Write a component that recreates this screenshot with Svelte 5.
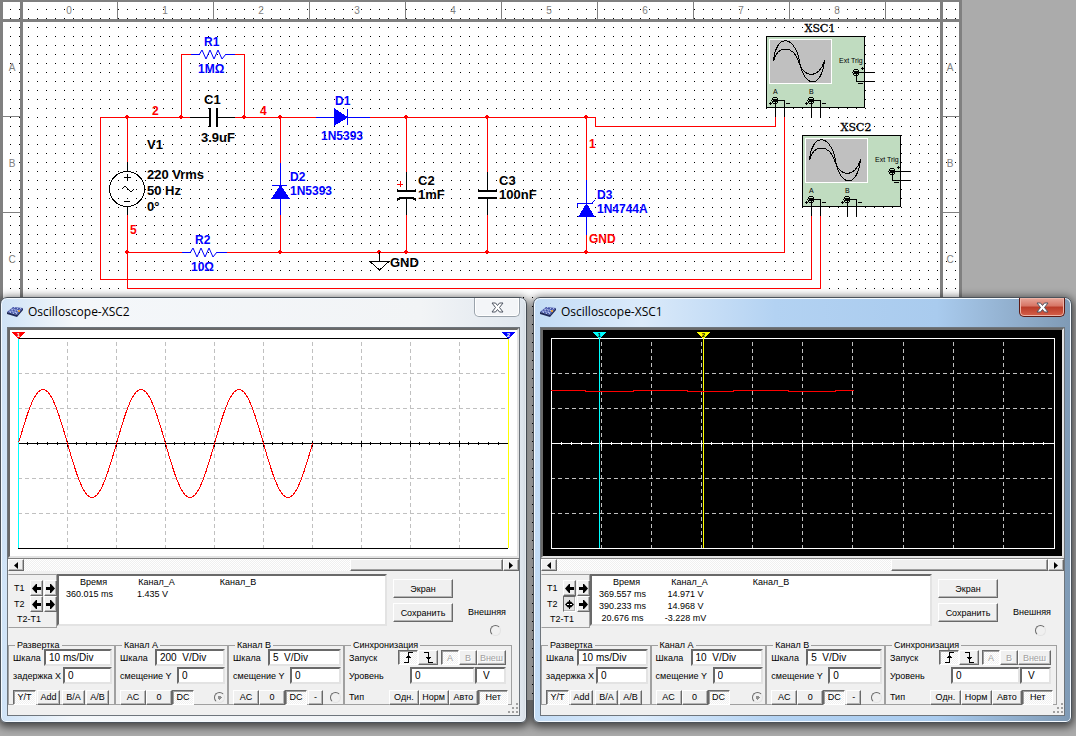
<script lang="ts">
	type Label = [text: string, x: number, y: number, kind: string];

	const labels: Label[] = [
		['R1', 204, 46, 'part'],
		['1MΩ', 198, 73, 'part'],
		['C1', 204, 104, 'cap'],
		['3.9uF', 201, 142, 'cap'],
		['2', 152, 115, 'net'],
		['4', 260, 115, 'net'],
		['D1', 335, 105, 'part'],
		['1N5393', 321, 140, 'part'],
		['V1', 147, 149, 'cap'],
		['220 Vrms', 147, 179, 'cap'],
		['50 Hz', 147, 195, 'cap'],
		['0°', 147, 211, 'cap'],
		['5', 130, 234, 'net'],
		['R2', 195, 244, 'part'],
		['10Ω', 191, 271, 'part'],
		['D2', 290, 181, 'part'],
		['1N5393', 290, 195, 'part'],
		['C2', 418, 185, 'cap'],
		['1mF', 418, 199, 'cap'],
		['C3', 499, 185, 'cap'],
		['100nF', 499, 199, 'cap'],
		['D3', 597, 199, 'part'],
		['1N4744A', 597, 213, 'part'],
		['1', 589, 148, 'net'],
		['GND', 589, 243, 'net'],
		['GND', 390, 267, 'cap'],
	];

	const nodes = [
		[127, 117], [181, 117], [244, 117], [280, 117], [406, 117], [487, 117], [586, 117],
		[127, 252], [280, 252], [379, 252], [406, 252], [487, 252], [586, 252],
	];

	const instruments = [
		{ name: 'XSC1', x: 766, y: 36 },
		{ name: 'XSC2', x: 802, y: 135 },
	];

	function sine() {
		let d = 'M8.5 112';
		for (let x = 1; x <= 294; x++) {
			d += ` L${x + 8.5} ${(113.5 - 54 * Math.sin((x / 98) * 2 * Math.PI)).toFixed(1)}`;
		}
		return d;
	}

	const scopes = [
		{
			id: 'xsc2',
			title: 'Oscilloscope-XSC2',
			active: false,
			width: 507,
			right: 498,
			div: 49,
			cursors: [
				{ n: '1', x: 8, line: '#00ffff', mark: '#ff0000', text: '#fff' },
				{ n: '2', x: 498, line: '#ffff00', mark: '#0000ff', text: '#fff' },
			],
			trace: sine(),
			rows: [['360.015 ms', '1.435 V']],
			scaleA: '200  V/Div',
		},
		{
			id: 'xsc1',
			title: 'Oscilloscope-XSC1',
			active: true,
			width: 519,
			right: 511,
			div: 50.3,
			cursors: [
				{ n: '1', x: 56, line: '#00ffff', mark: '#00ffff', text: '#000' },
				{ n: '2', x: 160, line: '#ffff00', mark: '#ffff00', text: '#000' },
			],
			trace: 'M8 60.5 H42 V61.5 H90 V60.5 H144 V61.5 H190 V60.5 H245 V61.5 H292 V60.5 H311',
			rows: [
				['369.557 ms', '14.971 V'],
				['390.233 ms', '14.968 V'],
				['20.676 ms', '-3.228 mV'],
			],
			scaleA: '10  V/Div',
		},
	];

	const range = (n: number) => Array.from({ length: n }, (_, i) => i);
</script>

{#snippet arrow(dir: string)}
	<svg class="arrow" width="9" height="9" viewBox="0 0 9 9" aria-hidden="true">
		{#if dir === 'left'}
			<path d="M0 4.5 L4 0 H5 V3 H9 V6 H5 V9 H4 Z" />
		{:else if dir === 'right'}
			<path d="M9 4.5 L5 0 H4 V3 H0 V6 H4 V9 H5 Z" />
		{:else}
			<path d="M0 4.5 L3 1.5 H4 V0 H5 V1.5 H6 L9 4.5 L6 7.5 H5 V9 H4 V7.5 H3 Z" />
			<path d="M2 4.5 H4 M5 4.5 H7" stroke="#fff" />
		{/if}
	</svg>
{/snippet}

{#snippet jack(x: number, y: number)}
	<circle cx={x} cy={y} r="3" fill="none" stroke="#000" />
	<circle cx={x} cy={y} r="2" fill="#000" />
{/snippet}

{#snippet channel(id: string, name: string, scale: string, invert: boolean)}
	<fieldset>
		<legend>{name}</legend>
		<div class="row">
			<label class="scale" for="{id}-scale">Шкала</label>
			<input id="{id}-scale" type="text" value={scale} />
		</div>
		<div class="row">
			<label class="offset" for="{id}-offset">смещение Y</label>
			<input id="{id}-offset" type="text" value="0" />
		</div>
		<div class="row buttons">
			<button class="ac">AC</button>
			<button class="ac">0</button>
			<button class="dc pressed">DC</button>
			{#if invert}<button class="minus">-</button>{/if}
			<input class="probe" type="radio" name={id} aria-label={name} checked={!invert} disabled={!invert} />
		</div>
	</fieldset>
{/snippet}

<main class="desktop">
	<svg class="sheet" width="962" height="700" viewBox="0 0 962 700" shape-rendering="crispEdges">
		<defs>
			<pattern id="dots" width="9" height="9" patternUnits="userSpaceOnUse">
				<rect x="1" y="0" width="1" height="1" fill="#000" />
			</pattern>
		</defs>
		<rect width="962" height="700" fill="#fff" />
		<rect x="3" y="3" width="957" height="697" fill="url(#dots)" />

		<!-- sheet border and rulers -->
		<g fill="#808080">
			<rect x="0" y="0" width="962" height="2" />
			<rect x="0" y="19" width="962" height="3" />
			<rect x="0" y="0" width="3" height="700" />
			<rect x="20" y="0" width="3" height="700" />
			<rect x="940" y="0" width="3" height="700" />
			<rect x="959" y="0" width="3" height="700" />
			{#each range(9) as i}
				<rect x={117 + i * 96} y="2" width="1" height="17" />
				<text class="ruler" x={69 + i * 96} y="14">{i}</text>
			{/each}
			{#each ['A', 'B', 'C'] as letter, i}
				<rect x="3" y={116 + i * 96} width="17" height="1" />
				<rect x="943" y={116 + i * 96} width="16" height="1" />
				<text class="ruler" x="12" y={71 + i * 96}>{letter}</text>
				<text class="ruler" x="950" y={71 + i * 96}>{letter}</text>
			{/each}
		</g>

		<!-- wires -->
		<g fill="none" stroke="#f00">
			<path d="M190.5 117.5 H100.5 V279.5 H811.5 V216" />
			<path d="M127.5 117 V162 M127.5 215 V288.5 H820.5 V216" />
			<path d="M191 54.5 H181.5 V117 M235 54.5 H244.5 V117" />
			<path d="M235 117.5 H316 M370 117.5 H595.5 V126.5 H775.5 V117" />
			<path d="M280.5 117 V163 M280.5 215 V252" />
			<path d="M127 252.5 H182 M227 252.5 H784.5 V117" />
			<path d="M406.5 117 V172 M406.5 215 V252 M487.5 117 V172 M487.5 215 V252" />
			<path d="M586.5 117 V180 M586.5 235 V252" />
			<path d="M397 184.5 H403 M400.5 181 V187" />
		</g>
		{#each nodes as [x, y]}
			<path d="M{x - 1} {y - 2} h2 v1 h1 v2 h-1 v1 h-2 v-1 h-1 v-2 h1 Z" fill="#f00" />
		{/each}

		<!-- resistors and diodes -->
		<g fill="none" stroke="#00f">
			<path d="M191 54.5 H200 M226 54.5 H235 M182 252.5 H190 M217 252.5 H227" />
			<path d="M316 117.5 H370 M347.5 109 V125" />
			<path d="M280.5 163 V215 M272 185.5 H287" />
			<path d="M586.5 180 V235 M577.5 207 V204 L579 203.5 H592 L595 200" />
		</g>
		<g fill="none" stroke="#00f" shape-rendering="auto">
			<path d="M199 55 L202 50 L206 59 L210 50 L214 59 L218 50 L222 59 L226 54" />
			<path d="M190 253 L193 248 L197 257 L201 248 L205 257 L209 248 L213 257 L217 252" />
		</g>
		<g fill="#00f">
			<path d="M334 108 L348 117.5 L334 126 Z" />
			<path d="M280.5 185 L290 199 H271 Z" />
			<path d="M586.5 203 L595 217 H578 Z" />
		</g>

		<!-- capacitors, source and ground -->
		<g fill="none" stroke="#000">
			<path d="M190 117.5 H209 M218 117.5 H235" />
			<path d="M210 108 V127 M217 108 V127" stroke-width="2" />
			<path d="M406.5 172 V190 M406.5 199 V215 M487.5 172 V190 M487.5 198 V215" />
			<path d="M397 191 H416 M478 191 H497 M478 198 H497" stroke-width="2" />
			<path d="M397 200 L400 198 H413 L416 200" stroke-width="2" />
			<path d="M127.5 162 V171 M127.5 206 V215 M124 177.5 H131 M127.5 174 V181 M124 201.5 H130" />
			<circle cx="127" cy="189" r="17.5" />
			<path d="M122 189 L125 186 L131 192 L134 189" shape-rendering="auto" />
			<path d="M379.5 252 V261 M370 261.5 H389 L379.5 270 Z" />
		</g>

		{#each labels as [text, x, y, kind]}
			<text class="label {kind}" {x} {y}>{text}</text>
		{/each}

		<!-- oscilloscope symbols -->
		{#each instruments as scope}
			<g transform="translate({scope.x} {scope.y})">
				<text class="instrument" x="54" y="-4">{scope.name}</text>
				<rect x="0.5" y="0.5" width="98" height="71" fill="#c0dcc0" stroke="#000" />
				<rect x="3.5" y="3.5" width="62" height="44" fill="#c0c0c0" stroke="#fff" />
				<g fill="none" stroke="#000">
					<path d="M7.5 25 C10 -2 28 -2 33.5 25 C38 53 56 53 58.5 24" />
					<path d="M7.5 25 C11 9 27 9 32.5 25 C37 43 54 43 58.5 24" />
					<path d="M9 64.5 H18.5 V81 M9.5 64 V81 M45 64.5 H54.5 V81 M45.5 64 V81" />
					<path d="M90 36.5 H109 M90.5 36 V45.5 H109" />
					<path d="M3 67.5 H6 M4.5 66 V69 M39 67.5 H42 M40.5 66 V69 M20 67.5 H24 M56 67.5 H60 M95 32.5 H98 M96.5 31 V34 M92 47.5 H97" />
				</g>
				{@render jack(9, 64.5)}
				{@render jack(45, 64.5)}
				{@render jack(90, 36.5)}
				<text class="pin" x="7" y="58">A</text>
				<text class="pin" x="43" y="58">B</text>
				<text class="pin" x="73" y="27">Ext Trig</text>
			</g>
		{/each}
	</svg>

	<div class="windows">
		{#each scopes as scope}
			<section class="window" class:active={scope.active} aria-labelledby="{scope.id}-title">
				<header>
					<svg class="app-icon" width="16" height="14" viewBox="0 0 16 14" aria-hidden="true">
						<path d="M6 2 L16 3 L10 10 L0 7 Z" fill="#4656a8" />
						<path d="M0 7 L10 10 V12 L0 9 Z M10 10 L16 3 V5 L10 12" fill="#1f2857" />
						<path d="M4 4 L13 6 M2 6 L11 8 M8 2 L3 8 M11 3 L6 9 M14 3 L9 9" stroke="#b9c4ee" stroke-dasharray="2 1" />
						<rect x="11" y="5" width="2" height="2" fill="#e0a040" />
					</svg>
					<h2 id="{scope.id}-title">{scope.title}</h2>
					<button class="close" aria-label="Close">
						<svg width="13" height="11" viewBox="0 0 13 11">
							<path d="M1 1 H4.5 L6.5 3.5 L8.5 1 H12 L8.5 5.5 L12 10 H8.5 L6.5 7.5 L4.5 10 H1 L4.5 5.5 Z" />
						</svg>
					</button>
				</header>

				<div class="client">
					<svg class="plot" viewBox="0 0 {scope.width} 226" shape-rendering="crispEdges">
						<g class="grid">
							{#each range(9) as i}
								<path d="M{Math.floor(8 + (i + 1) * scope.div) + 0.5} 12 V218" />
							{/each}
							{#each [43, 78, 148, 183] as y}
								<path d="M8 {y + 0.5} H{scope.right}" />
							{/each}
						</g>
						<g class="axis">
							<path d="M8 8.5 H{scope.right} M8 113.5 H{scope.right} M8 218.5 H{scope.right}" />
							{#if scope.active}<path d="M8.5 8 V219 M{scope.right + 0.5} 8 V219" />{/if}
							{#each range(50) as i}
								{@const x = Math.floor(8 + (i * scope.div) / 5) + 0.5}
								<path d={i % 5 ? `M${x} 112 V115` : `M${x} 111 V117`} />
							{/each}
						</g>
						{#each scope.cursors as cursor}
							<path d="M{cursor.x + 0.5} 8 V218" stroke={cursor.line} />
						{/each}
						<path class="trace" d={scope.trace} />
						{#each scope.cursors as cursor}
							<path d="M{cursor.x - 6} 2 H{cursor.x + 7} L{cursor.x + 0.5} 9 Z" fill={cursor.mark} />
							<text class="mark" x={cursor.x + 0.5} y="7" fill={cursor.text}>{cursor.n}</text>
						{/each}
					</svg>

					<div class="scrollbar">
						<button aria-label="Scroll left"><svg width="4" height="7" viewBox="0 0 4 7"><path d="M4 0 V7 L0 3.5 Z" /></svg></button>
						<div class="track"><div class="thumb"></div></div>
						<button aria-label="Scroll right"><svg width="4" height="7" viewBox="0 0 4 7"><path d="M0 0 V7 L4 3.5 Z" /></svg></button>
					</div>

					<div class="measure">
						<div class="steps">
							<span>T1</span>
							<button aria-label="T1 left">{@render arrow('left')}</button>
							<button aria-label="T1 right">{@render arrow('right')}</button>
							<span>T2</span>
							<button class:held={scope.active} aria-label="T2 left">{@render arrow(scope.active ? 'move' : 'left')}</button>
							<button aria-label="T2 right">{@render arrow('right')}</button>
							<span class="delta">T2-T1</span>
						</div>
						<div class="readout">
							<table>
								<thead>
									<tr><th>Время</th><th>Канал_A</th><th class="wide">Канал_B</th></tr>
								</thead>
								<tbody>
									{#each scope.rows as [time, value]}
										<tr><td>{time}</td><td>{value}</td><td></td></tr>
									{/each}
								</tbody>
							</table>
						</div>
						<div class="actions">
							<button>Экран</button>
							<button>Сохранить</button>
						</div>
						<div class="external">
							<label for="{scope.id}-ext">Внешняя</label>
							<input id="{scope.id}-ext" type="radio" name="{scope.id}-ext" />
						</div>
					</div>

					<div class="groups">
						<fieldset class="timebase">
							<legend>Развертка</legend>
							<div class="row">
								<label class="scale" for="{scope.id}-time">Шкала</label>
								<input id="{scope.id}-time" type="text" value="10 ms/Div" />
							</div>
							<div class="row">
								<label class="offset" for="{scope.id}-delay">задержка X</label>
								<input id="{scope.id}-delay" type="text" value="0" />
							</div>
							<div class="row buttons">
								<button class="pressed">Y/T</button>
								<button>Add</button>
								<button>B/A</button>
								<button>A/B</button>
							</div>
						</fieldset>

						{@render channel(`${scope.id}-a`, 'Канал A', scope.scaleA, false)}
						{@render channel(`${scope.id}-b`, 'Канал B', '5  V/Div', true)}

						<fieldset class="trigger">
							<legend>Синхронизация</legend>
							<div class="row">
								<span class="name">Запуск</span>
								<button class="edge pressed" aria-label="Rising edge">
									<svg width="11" height="11" viewBox="0 0 11 11" shape-rendering="crispEdges">
										<path d="M1 10.5 H5.5 V0.5 H10 M3 5.5 H8 M4 4.5 H7" />
									</svg>
								</button>
								<button class="edge" aria-label="Falling edge">
									<svg width="11" height="11" viewBox="0 0 11 11" shape-rendering="crispEdges">
										<path d="M1 0.5 H5.5 V10.5 H10 M3 5.5 H8 M4 6.5 H7" />
									</svg>
								</button>
								<button class="source pressed" disabled>A</button>
								<button class="source" disabled>B</button>
								<button class="outer" disabled>Внеш</button>
							</div>
							<div class="row">
								<label class="name" for="{scope.id}-level">Уровень</label>
								<input id="{scope.id}-level" class="level" type="text" value="0" />
								<input class="unit" type="text" value="V" aria-label="V" />
							</div>
							<div class="row buttons">
								<span class="name">Тип</span>
								<button>Одн.</button>
								<button>Норм</button>
								<button>Авто</button>
								<button class="pressed">Нет</button>
							</div>
						</fieldset>
					</div>
					<svg class="grip" width="12" height="12" viewBox="0 0 12 12" aria-hidden="true">
						<path d="M9 0h2v2h-2z M5 4h2v2h-2z M9 4h2v2h-2z M1 8h2v2h-2z M5 8h2v2h-2z M9 8h2v2h-2z" />
					</svg>
				</div>
			</section>
		{/each}
	</div>
</main>

<style>
	:global(body) { background: #ababab; }

	.desktop {
		position: relative;
		min-height: 100vh;
		overflow: hidden;
		box-sizing: border-box;
		padding: 297px 4px 12px 0;
		font: 9px/12px "Liberation Sans", Arial, sans-serif;
		color: #000;
	}
	.sheet { position: absolute; top: 0; left: 0; }

	.ruler { font-size: 10px; text-anchor: middle; }
	.label { font-size: 12px; font-weight: bold; }
	.label.part { fill: #00f; }
	.label.net { fill: #f00; }
	.label.cap { font-size: 13px; }
	.instrument {
		font: 11px "DejaVu Serif", serif;
		text-anchor: middle;
		stroke: #000;
		stroke-width: .3px;
	}
	.pin { font-size: 7px; }

	.windows {
		position: relative;
		display: grid;
		grid-template-columns: minmax(0, 527fr) minmax(0, 539fr);
		gap: 6px;
		align-items: start;
	}
	.window {
		border: 1px solid #4b525a;
		border-radius: 7px 7px 6px 6px;
		padding: 0 6px 6px;
		background: linear-gradient(90deg, #cfe3f7, #f4f7fa 14%, #f2f4f6 80%, #dfe6ee);
		box-shadow: inset 0 0 0 1px #f4faff, 0 2px 9px 2px rgba(0, 0, 0, .6);
	}
	.window.active {
		background: linear-gradient(90deg, #c3dcf5, #dbeafa 20%, #b3d2f2 45%, #a9cbee 75%, #7f9ab5);
	}

	header {
		display: flex;
		align-items: flex-start;
		height: 29px;
	}
	.app-icon { margin: 7px 5px 0 0; }
	h2 {
		flex: 1;
		margin: 0;
		font: 12px/28px "Open Sans", "Noto Sans", sans-serif;
	}

	button {
		box-sizing: border-box;
		padding: 0;
		border: 1px solid;
		border-color: #fff #696969 #696969 #fff;
		box-shadow: inset -1px -1px #b4b4b4;
		background: #f0f0f0;
		font: inherit;
		line-height: 10px;
		color: #000;
		white-space: nowrap;
	}
	.close {
		display: grid;
		place-items: center;
		width: 46px;
		height: 19px;
		border: 1px solid #9aa3ac;
		border-top: 0;
		border-radius: 0 0 5px 5px;
		background: #f3f5f8;
		box-shadow: inset 0 0 0 1px #fff;
	}
	.close path { fill: #fff; stroke: #4e5562; }
	.active .close {
		border-color: #5d1a14;
		background: linear-gradient(#e8a79a, #d67464 45%, #b93b28 50%, #d5604a);
		box-shadow: inset 0 0 0 1px #eeb5a8;
	}

	.client {
		position: relative;
		border: 1px solid #6e757c;
		background: #f0f0f0;
		padding-bottom: 10px;
	}
	.plot {
		display: block;
		box-sizing: border-box;
		width: 100%;
		height: auto;
		border: 2px solid;
		border-color: #696969 #e3e3e3 #e3e3e3 #696969;
		background: #fff;
	}
	.active .plot { background: #000; }
	.plot path { vector-effect: non-scaling-stroke; }
	.grid path { stroke: #c0c0c0; stroke-dasharray: 4 3; }
	.axis path { stroke: #000; }
	.active .axis path { stroke: #fff; }
	.trace { fill: none; stroke: #f00; }
	.mark { font: bold 6px "Liberation Sans", sans-serif; text-anchor: middle; }

	.scrollbar {
		display: flex;
		height: 13px;
		border-top: 1px solid #808080;
		box-sizing: border-box;
	}
	.scrollbar button { display: grid; place-items: center; width: 16px; }
	.track {
		flex: 1;
		display: flex;
		justify-content: flex-end;
		background: repeating-conic-gradient(#fff 0 25%, #f0f0f0 0 50%) 0 0 / 2px 2px;
	}
	.thumb {
		box-sizing: border-box;
		width: 32%;
		border: 1px solid;
		border-color: #fff #696969 #696969 #fff;
		box-shadow: inset -1px -1px #a0a0a0;
		background: #f0f0f0;
	}

	.measure { display: flex; margin-top: 3px; height: 54px; }
	.steps {
		display: grid;
		grid-template-columns: 20px 13px 13px;
		grid-template-rows: 16px 16px 1fr;
		column-gap: 1px;
		box-sizing: border-box;
		width: 49px;
		padding-top: 5px;
		border: 1px solid;
		border-color: #a0a0a0 #a0a0a0 #a0a0a0 #f0f0f0;
	}
	.steps span { padding-left: 5px; line-height: 16px; }
	.steps button { display: grid; place-items: center; }
	.steps .held { background: #e2e2e2; border-color: #696969 #fff #fff #696969; }
	.steps .delta { grid-column: 1 / 4; padding-left: 8px; line-height: 14px; }

	.readout {
		flex: 1;
		box-sizing: border-box;
		height: 52px;
		padding-left: 3px;
		border: 2px solid;
		border-color: #696969 #e3e3e3 #e3e3e3 #696969;
		background: #fff;
	}
	table { border-collapse: collapse; table-layout: fixed; }
	th, td {
		width: 63px;
		padding: 0;
		font-weight: normal;
		text-align: center;
		line-height: 12px;
		font-size: 9px;
	}
	td { padding-right: 8px; width: 55px; }
	.wide { width: 100px; }

	.actions {
		display: flex;
		flex-direction: column;
		gap: 5px;
		width: 60px;
		margin: 5px 0 0 6px;
	}
	.actions button { height: 19px; }
	.external {
		display: flex;
		flex-direction: column;
		align-items: center;
		gap: 7px;
		width: 66px;
		padding: 32px 0 0 2px;
		box-sizing: border-box;
	}

	input[type='radio'] {
		appearance: none;
		flex: none;
		box-sizing: border-box;
		width: 11px;
		height: 11px;
		margin: 0;
		border: 1px solid;
		border-color: #696969 #e3e3e3 #e3e3e3 #696969;
		border-radius: 50%;
		background: #f0f0f0;
	}
	input[type='radio']:checked { background: radial-gradient(#909090 0 2px, #f0f0f0 2px); }
	.external input[type='radio'] { margin-left: 16px; }

	.groups {
		display: grid;
		grid-template-columns: 107fr 113fr 116fr 168fr;
		margin: 14px 7px 0 0;
	}
	fieldset {
		min-width: 0;
		margin: 0;
		padding: 0 2px 0 4px;
		border: 1px solid #a0a0a0;
	}
	legend { padding: 0 2px; margin-left: 2px; line-height: 7px; }
	.row { display: flex; align-items: center; height: 17px; margin-bottom: 1px; }
	.row.buttons { height: 14px; margin: 6px 0 0; }
	.row button { height: 15px; }
	.scale { flex: 0 0 35px; }
	.offset { flex: 0 0 57px; white-space: nowrap; }
	.timebase .scale { flex-basis: 31px; }
	.timebase .offset { flex-basis: 50px; }
	input[type='text'] {
		flex: 1;
		box-sizing: border-box;
		min-width: 0;
		height: 17px;
		margin: 0;
		padding: 0 3px;
		border: 2px solid;
		border-color: #696969 #e3e3e3 #e3e3e3 #696969;
		background: #fff;
		font: 10px/12px "Liberation Sans", Arial, sans-serif;
		color: #000;
		white-space: pre;
	}
	.pressed {
		border-color: #696969 #fff #fff #696969;
		box-shadow: inset 1px 1px #a0a0a0;
		background: repeating-conic-gradient(#fff 0 25%, #f0f0f0 0 50%) 0 0 / 2px 2px;
	}
	.timebase .buttons { gap: 1px; }
	.timebase .buttons button { width: 23px; }
	.timebase .buttons button:nth-child(3) { margin-left: 1px; }
	.ac { width: 26px; }
	.dc { width: 22px; }
	.minus { width: 15px; margin-left: 1px; }
	.probe { margin-left: auto !important; }

	.name { width: 49px; }
	.edge { display: grid; place-items: center; width: 20px; }
	.edge path { fill: none; stroke: #000; }
	.source { width: 18px; }
	.edge + .source { margin-left: 3px; }
	.outer { flex: 1; }
	button:disabled { color: #a0a0a0; text-shadow: 1px 1px #fff; }
	.trigger .level { margin-left: 12px; }
	.trigger .unit { flex: 0 0 31px; padding-left: 6px; }
	.trigger .name { flex: none; }
	.trigger .row { padding-right: 3px; }
	.trigger .buttons { padding-right: 1px; }
	.trigger .buttons .name { width: 40px; }
	.trigger .buttons button { flex: 1; }

	.arrow { display: block; }
	.grip { position: absolute; right: 0; bottom: 0; fill: #a0a0a0; }
</style>
